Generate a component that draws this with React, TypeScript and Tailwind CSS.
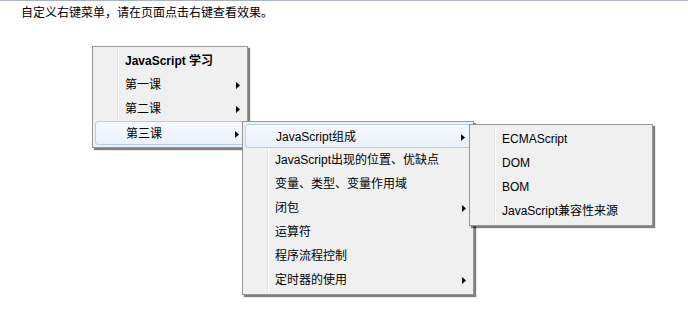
import React from "react"

type Item = { label: string; sub?: boolean; active?: boolean; bold?: boolean }

const menuFont = { fontFamily: '"Liberation Sans", "Noto Sans CJK SC", sans-serif' }

function Arrow() {
  return (
    <svg width="4" height="7" viewBox="0 0 4 7" className="absolute right-[5px] top-[9px]">
      <path d="M0 0 L4 3.5 L0 7 Z" fill="#000" />
    </svg>
  )
}

function Menu({ items, className }: { items: Item[]; className: string }) {
  return (
    <div
      className={`absolute border border-[#979797] bg-[#f0f0f0] p-[2px] shadow-[2px_2px_1px_rgba(0,0,0,0.5)] ${className}`}
      style={menuFont}
    >
      <div className="absolute top-[2px] bottom-[2px] left-[24px] w-[2px] border-l border-[#e2e3e3] bg-white" />
      {items.map((item) => (
        <div
          key={item.label}
          className={`relative h-[24px] rounded-[3px] pl-[30px] text-[12px] leading-[24px] text-black ${
            item.active
              ? "border border-[#aecff7] bg-gradient-to-b from-[#f7fafe] to-[#eaf1fb] pl-[29px] leading-[22px]"
              : ""
          } ${item.bold ? "font-bold" : ""}`}
        >
          {item.label}
          {item.sub && <Arrow />}
        </div>
      ))}
    </div>
  )
}

export default function App() {
  return (
    <div className="relative h-[316px] w-[688px] overflow-hidden border-t border-[#a8b0c4] bg-white">
      <p
        className="pl-[21px] pt-[3px] text-[12px] leading-[16px] text-black"
        style={{ fontFamily: '"Noto Sans CJK SC", sans-serif' }}
      >
        自定义右键菜单，请在页面点击右键查看效果。
      </p>

      <Menu
        className="left-[92px] top-[45px] w-[156px]"
        items={[
          { label: "JavaScript 学习", bold: true },
          { label: "第一课", sub: true },
          { label: "第二课", sub: true },
          { label: "第三课", sub: true, active: true },
        ]}
      />
      <Menu
        className="left-[242px] top-[120px] w-[232px]"
        items={[
          { label: "JavaScript组成", sub: true, active: true },
          { label: "JavaScript出现的位置、优缺点" },
          { label: "变量、类型、变量作用域" },
          { label: "闭包", sub: true },
          { label: "运算符" },
          { label: "程序流程控制" },
          { label: "定时器的使用", sub: true },
        ]}
      />
      <Menu
        className="left-[469px] top-[123px] w-[184px]"
        items={[
          { label: "ECMAScript" },
          { label: "DOM" },
          { label: "BOM" },
          { label: "JavaScript兼容性来源" },
        ]}
      />
    </div>
  )
}
